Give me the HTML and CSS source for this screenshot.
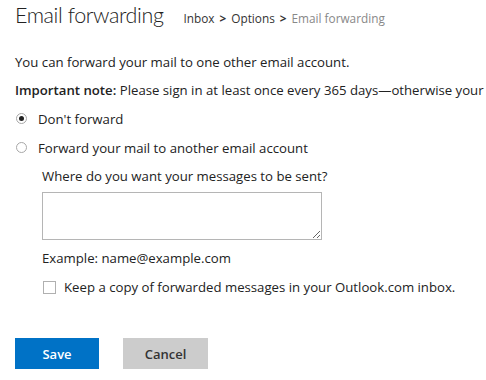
FILE: index.html
```html
<!DOCTYPE html>
<html lang="en">
<head>
  <meta charset="UTF-8" />
  <title>Email forwarding</title>
  <link rel="stylesheet" href="styles.css">
</head>
<body>
  <div id="page">
    <div id="header">
      <h1>Email forwarding</h1>
      <div class="crumbs">
        <span class="crumb">Inbox</span>
        <span class="sep">&gt;</span>
        <span class="crumb">Options</span>
        <span class="sep">&gt;</span>
        <span class="crumb current">Email forwarding</span>
      </div>
    </div>

    <p class="intro">You can forward your mail to one other email account.</p>
    <p class="note"><b>Important note:</b> Please sign in at least once every 365 days—otherwise your</p>

    <label class="option">
      <span class="radio checked"></span>
      Don't forward
    </label>
    <label class="option">
      <span class="radio"></span>
      Forward your mail to another email account
    </label>

    <div class="forward-box">
      <p class="field-label">Where do you want your messages to be sent?</p>
      <textarea class="dest"></textarea>
      <p class="hint">Example: name@example.com</p>
      <label class="keep">
        <span class="check"></span>
        Keep a copy of forwarded messages in your Outlook.com inbox.
      </label>
    </div>

    <div class="actions">
      <button class="btn save">Save</button>
      <button class="btn cancel">Cancel</button>
    </div>
  </div>
</body>
</html>
```

FILE: styles.css
```css
* {
  box-sizing: border-box;
  margin: 0;
  padding: 0;
}
body {
  font-family: 'Open Sans', 'Noto Sans', sans-serif;
  font-size: 13.2px;
  color: #222;
  background: #fff;
  overflow: hidden;
}
#page {
  padding: 0 15px;
  white-space: nowrap;
}
#header {
  display: flex;
  align-items: baseline;
  gap: 20px;
  height: 48px;
  padding-top: 2px;
}
h1 {
  font-family: 'Lato', 'Open Sans', sans-serif;
  font-size: 21.5px;
  letter-spacing: -0.4px;
  font-weight: 300;
  color: #222;
}
.crumbs {
  display: flex;
  gap: 5px;
  font-size: 11.8px;
  color: #333;
}
.crumbs .sep {
  font-weight: 700;
}
.crumbs .current {
  color: #888;
}
.intro, .note {
  line-height: 28px;
}
.note b {
  font-weight: 600;
}
.option {
  display: flex;
  align-items: center;
  gap: 11px;
  height: 29px;
  padding-left: 1px;
}
.radio {
  width: 11px;
  height: 11px;
  border: 1px solid #a8a8a8;
  border-radius: 50%;
  display: flex;
  align-items: center;
  justify-content: center;
}
.radio.checked::after {
  content: "";
  width: 5px;
  height: 5px;
  border-radius: 50%;
  background: #222;
}
.forward-box {
  padding-left: 27px;
}
.field-label {
  line-height: 28px;
}
.dest {
  display: block;
  width: 280px;
  height: 48px;
  border: 1px solid #b5b5b5;
  margin-top: 2px;
  resize: vertical;
}
.hint {
  line-height: 28px;
  margin-top: 4px;
}
.keep {
  display: flex;
  align-items: center;
  gap: 8px;
  height: 30px;
  padding-left: 1px;
}
.check {
  width: 13px;
  height: 13px;
  border: 1px solid #b0b0b0;
}
.actions {
  display: flex;
  gap: 24px;
  margin-top: 36px;
}
.btn {
  width: 84px;
  height: 31px;
  border: none;
  font-family: 'Open Sans', 'Noto Sans', sans-serif;
  font-size: 13px;
  font-weight: 600;
}
.save {
  background: #0072c6;
  color: #fff;
}
.cancel {
  width: 85px;
  background: #cccccc;
  color: #333;
}
```
